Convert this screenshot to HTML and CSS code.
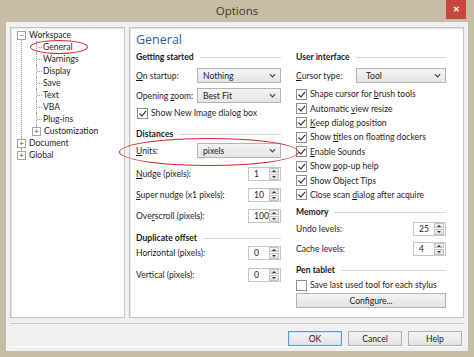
FILE: index.html
```html
<!DOCTYPE html>
<html lang="en">
<head>
    <meta charset="UTF-8">
    <title>Options</title>
    <link rel="stylesheet" href="styles.css">
</head>
<body>

<div class="window">
    <div class="titlebar">
        <span class="title">Options</span>
        <span class="close">&#x2715;</span>
    </div>

    <div class="client">
        <div class="panes">
            <div class="tree">
                <ul class="root">
                    <li class="node open">
                        <div class="item"><span class="expander">&minus;</span><span>Workspace</span></div>
                        <ul class="children">
                            <li><div class="item">General</div></li>
                            <li><div class="item">Warnings</div></li>
                            <li><div class="item">Display</div></li>
                            <li><div class="item">Save</div></li>
                            <li><div class="item">Text</div></li>
                            <li><div class="item">VBA</div></li>
                            <li><div class="item">Plug-ins</div></li>
                            <li class="node"><div class="item"><span class="expander">+</span><span>Customization</span></div></li>
                        </ul>
                    </li>
                    <li class="node"><div class="item"><span class="expander">+</span><span>Document</span></div></li>
                    <li class="node"><div class="item"><span class="expander">+</span><span>Global</span></div></li>
                </ul>
            </div>

            <div class="page">
                <h1>General</h1>
                <div class="cols">
                    <div class="col col-left">
                        <div class="group-head g-start"><span>Getting started</span></div>
                        <div class="row r-startup">
                            <span class="label"><u>O</u>n startup:</span>
                            <div class="select">Nothing<svg viewBox="0 0 8 5"><polyline points="1,1 4,4 7,1"/></svg></div>
                        </div>
                        <div class="row r-zoom">
                            <span class="label">Opening <u>z</u>oom:</span>
                            <div class="select">Best Fit<svg viewBox="0 0 8 5"><polyline points="1,1 4,4 7,1"/></svg></div>
                        </div>
                        <div class="check c-newimg"><span class="box on"></span><span>Show New Image dialog box</span></div>

                        <div class="group-head g-dist"><span>Distances</span></div>
                        <div class="row r-units">
                            <span class="label"><u>U</u>nits:</span>
                            <div class="select">pixels<svg viewBox="0 0 8 5"><polyline points="1,1 4,4 7,1"/></svg></div>
                        </div>
                        <div class="row r-nudge">
                            <span class="label"><u>N</u>udge (pixels):</span>
                            <div class="spin"><span class="val">1</span><span class="arrows"><i class="up"></i><i class="down"></i></span></div>
                        </div>
                        <div class="row r-spin">
                            <span class="label"><u>S</u>uper nudge (x1 pixels):</span>
                            <div class="spin"><span class="val">10</span><span class="arrows"><i class="up"></i><i class="down"></i></span></div>
                        </div>
                        <div class="row r-spin">
                            <span class="label">Ove<u>r</u>scroll (pixels):</span>
                            <div class="spin"><span class="val">100</span><span class="arrows"><i class="up"></i><i class="down"></i></span></div>
                        </div>

                        <div class="group-head g-dup"><span>Duplicate offset</span></div>
                        <div class="row r-horiz">
                            <span class="label">Horizontal (pixels):</span>
                            <div class="spin"><span class="val">0</span><span class="arrows"><i class="up"></i><i class="down"></i></span></div>
                        </div>
                        <div class="row r-vert">
                            <span class="label">Vertical (pixels):</span>
                            <div class="spin"><span class="val">0</span><span class="arrows"><i class="up"></i><i class="down"></i></span></div>
                        </div>
                    </div>

                    <div class="col col-right">
                        <div class="group-head g-start"><span>User interface</span></div>
                        <div class="row r-startup">
                            <span class="label"><u>C</u>ursor type:</span>
                            <div class="select wide">Tool<svg viewBox="0 0 8 5"><polyline points="1,1 4,4 7,1"/></svg></div>
                        </div>
                        <div class="checks">
                            <div class="check"><span class="box on"></span><span>Shape cursor for <u>b</u>rush tools</span></div>
                            <div class="check"><span class="box on"></span><span>Automatic <u>v</u>iew resize</span></div>
                            <div class="check"><span class="box on"></span><span><u>K</u>eep dialog position</span></div>
                            <div class="check"><span class="box on"></span><span>Show <u>t</u>itles on floating dockers</span></div>
                            <div class="check"><span class="box on"></span><span><u>E</u>nable Sounds</span></div>
                            <div class="check"><span class="box on"></span><span>Show <u>p</u>op-up help</span></div>
                            <div class="check"><span class="box on"></span><span>Show Object Tips</span></div>
                            <div class="check"><span class="box on"></span><span>Close scan <u>d</u>ialog after acquire</span></div>
                        </div>

                        <div class="group-head g-mem"><span>Memory</span></div>
                        <div class="row r-undo">
                            <span class="label">Undo levels:</span>
                            <div class="spin"><span class="val">25</span><span class="arrows"><i class="up"></i><i class="down"></i></span></div>
                        </div>
                        <div class="row r-cache">
                            <span class="label">Cache levels:</span>
                            <div class="spin"><span class="val">4</span><span class="arrows"><i class="up"></i><i class="down"></i></span></div>
                        </div>

                        <div class="group-head g-pen"><span>Pen tablet</span></div>
                        <div class="check c-stylus"><span class="box"></span><span>Save last used tool for each stylus</span></div>
                        <button class="btn configure">Confi<u>g</u>ure...</button>
                    </div>
                </div>
            </div>
        </div>

        <div class="footer">
            <button class="btn default">OK</button>
            <button class="btn">Cancel</button>
            <button class="btn">Help</button>
        </div>
    </div>
</div>

<!-- red annotation rings drawn over the dialog -->
<div class="ring ring-general"></div>
<div class="ring ring-units"></div>

</body>
</html>
```

FILE: styles.css
```css
body {
    margin: 0;
    padding: 0;
    background-color: #c6bda5;
    font-family: Lato, "Noto Sans", sans-serif;
    font-size: 8.6px;
    color: #1e1e1e;
    position: relative;
    width: 474px;
    height: 357px;
    overflow: hidden;
}

.window {
    padding: 0 6px 6px 6px;
}

.titlebar {
    height: 22px;
    display: flex;
    align-items: flex-start;
    justify-content: center;
    margin: 0 -6px;
    position: relative;
}

.title {
    font-family: "Open Sans", Lato, sans-serif;
    font-size: 11.5px;
    line-height: 22px;
    color: #3a3a36;
}

.close {
    position: absolute;
    right: 8px;
    top: 0;
    width: 20px;
    height: 19px;
    background-color: #c9463f;
    color: #fff;
    font-size: 8px;
    line-height: 19px;
    text-align: center;
    font-weight: bold;
}

.client {
    background-color: #f0f0f0;
    height: 329px;
    padding: 5px 4px 0 4px;
    box-sizing: border-box;
}

.panes {
    display: flex;
    gap: 4px;
    height: 291px;
}

/* tree */

.tree {
    width: 115px;
    background-color: #fff;
    border: 1px solid #c3c3c3;
    box-shadow: inset 1px 1px 0 #e8e8e8;
    box-sizing: border-box;
    padding: 1px 0 0 5px;
}

.tree ul {
    list-style: none;
    margin: 0;
    padding: 0;
}

.tree li {
    position: relative;
}

.item {
    height: 12px;
    line-height: 12px;
    display: flex;
    align-items: center;
    white-space: nowrap;
}

.expander {
    width: 7px;
    height: 7px;
    border: 1px solid #a3a3a3;
    background-color: #fff;
    font-size: 8px;
    line-height: 7px;
    text-align: center;
    color: #4a4a4a;
    margin: 0 3px 0 1px;
    position: relative;
    z-index: 1;
}

.tree .children {
    margin-left: 10px;
}

.children > li > .item {
    padding-left: 17px;
}

.children > li.node > .item {
    padding-left: 5px;
}

.children > li.node .expander {
    margin-right: 3px;
}

/* dotted connectors */
.children > li::before {
    content: "";
    position: absolute;
    left: 10px;
    top: 0;
    height: 12px;
    border-left: 1px dotted #a3a3a3;
}

.children > li:last-child::before {
    height: 6px;
}

.children > li::after {
    content: "";
    position: absolute;
    left: 11px;
    top: 6px;
    width: 5px;
    border-top: 1px dotted #a3a3a3;
}

.children > li.node::after {
    display: none;
}

.root > li::before {
    content: "";
    position: absolute;
    left: 5px;
    top: 0;
    bottom: 0;
    border-left: 1px dotted #a3a3a3;
}

.root > li:first-child::before {
    top: 6px;
}

.root > li:last-child::before {
    bottom: auto;
    height: 6px;
}

/* page */

.page {
    flex: 1;
    background-color: #fff;
    border: 1px solid #c3c3c3;
    box-shadow: inset 1px 1px 0 #e8e8e8;
    box-sizing: border-box;
    padding: 3px 17px 0 6px;
}

.page h1 {
    margin: 0;
    font-family: "Open Sans", Lato, sans-serif;
    font-weight: normal;
    font-size: 12.5px;
    line-height: 17px;
    color: #2f5b9e;
}

.cols {
    display: flex;
    gap: 15px;
}

.col-left {
    width: 145px;
}

.col-right {
    flex: 1;
}

.group-head {
    display: flex;
    align-items: center;
    height: 14px;
    font-weight: bold;
    color: #1a1a1a;
}

.group-head::after {
    content: "";
    flex: 1;
    border-top: 1px solid #d8d8d8;
    margin-left: 6px;
}

.g-start { margin-top: 2px; }
.g-dist { margin-top: 7px; }
.g-dup { margin-top: 8px; }
.g-mem { margin-top: 3px; }
.g-pen { margin-top: 7px; }

.row {
    display: flex;
    align-items: center;
    justify-content: space-between;
    height: 15px;
}

.r-startup { margin-top: 4px; }
.r-zoom { margin-top: 5px; }
.r-units { margin-top: 2px; }
.r-nudge { margin-top: 8px; }
.r-spin { margin-top: 6px; }
.r-horiz { margin-top: 0; }
.r-vert { margin-top: 7px; }
.r-undo { margin-top: 2px; }
.r-cache { margin-top: 5px; }

u {
    text-decoration-thickness: 1px;
}

.select {
    width: 84px;
    height: 15px;
    box-sizing: border-box;
    border: 1px solid #b4b4b4;
    background: linear-gradient(#f4f4f4, #e4e4e4);
    display: flex;
    align-items: center;
    justify-content: space-between;
    padding: 0 4px 0 5px;
}

.select.wide {
    width: 90px;
    padding-left: 9px;
}

.select svg {
    width: 7px;
    height: 5px;
    fill: none;
    stroke: #444;
    stroke-width: 1.4;
}

.spin {
    width: 33px;
    height: 14px;
    box-sizing: border-box;
    border: 1px solid #c6c6c6;
    background-color: #fff;
    display: flex;
    align-items: center;
    justify-content: space-between;
    padding-left: 5px;
}

.arrows {
    width: 10px;
    height: 12px;
    display: flex;
    flex-direction: column;
    gap: 1px;
    margin-right: 1px;
}

.arrows i {
    flex: 1;
    background: linear-gradient(#f2f2f2, #dedede);
    border: 1px solid #c4c4c4;
    position: relative;
}

.arrows i::after {
    content: "";
    position: absolute;
    left: 2px;
    top: 1px;
    border-left: 2px solid transparent;
    border-right: 2px solid transparent;
}

.arrows .up::after {
    border-bottom: 2px solid #333;
}

.arrows .down::after {
    border-top: 2px solid #333;
}

.check {
    display: flex;
    align-items: center;
    height: 14px;
    white-space: nowrap;
}

.c-newimg {
    margin-top: 3px;
    padding-left: 1px;
}

.checks {
    margin-top: 4px;
}

.checks .check {
    height: 14.4px;
}

.c-stylus {
    margin-top: 1px;
}

.box {
    width: 9px;
    height: 9px;
    border: 1px solid #8e8e8e;
    background-color: #fff;
    margin-right: 3px;
    position: relative;
}

.box.on::after {
    content: "";
    position: absolute;
    left: 2.5px;
    top: 0;
    width: 2.5px;
    height: 5.5px;
    border-right: 1.6px solid #1b1b1b;
    border-bottom: 1.6px solid #1b1b1b;
    transform: rotate(40deg);
}

.btn {
    font-family: inherit;
    font-size: inherit;
    color: #1e1e1e;
    height: 15px;
    box-sizing: border-box;
    border: 1px solid #b2b2b2;
    background: linear-gradient(#f3f3f3, #e3e3e3);
    padding: 0;
}

.configure {
    display: block;
    width: 100%;
    margin-top: 1px;
}

.footer {
    margin-top: 5px;
    border-top: 1px solid #c9c9c9;
    box-shadow: 0 1px 0 #fff;
    display: flex;
    justify-content: flex-end;
    gap: 6px;
    padding: 7px 2px 0 0;
}

.footer .btn {
    width: 54px;
}

.footer .default {
    border-color: #5b9bd0;
    box-shadow: inset 0 0 0 1px #cfe3f5;
}

/* annotation rings */

.ring {
    position: absolute;
    border: 1.5px solid #d8262c;
    border-radius: 50%;
    box-sizing: border-box;
}

.ring-general {
    left: 30px;
    top: 40px;
    width: 58px;
    height: 14px;
}

.ring-units {
    left: 119px;
    top: 138px;
    width: 180px;
    height: 28px;
}
```
